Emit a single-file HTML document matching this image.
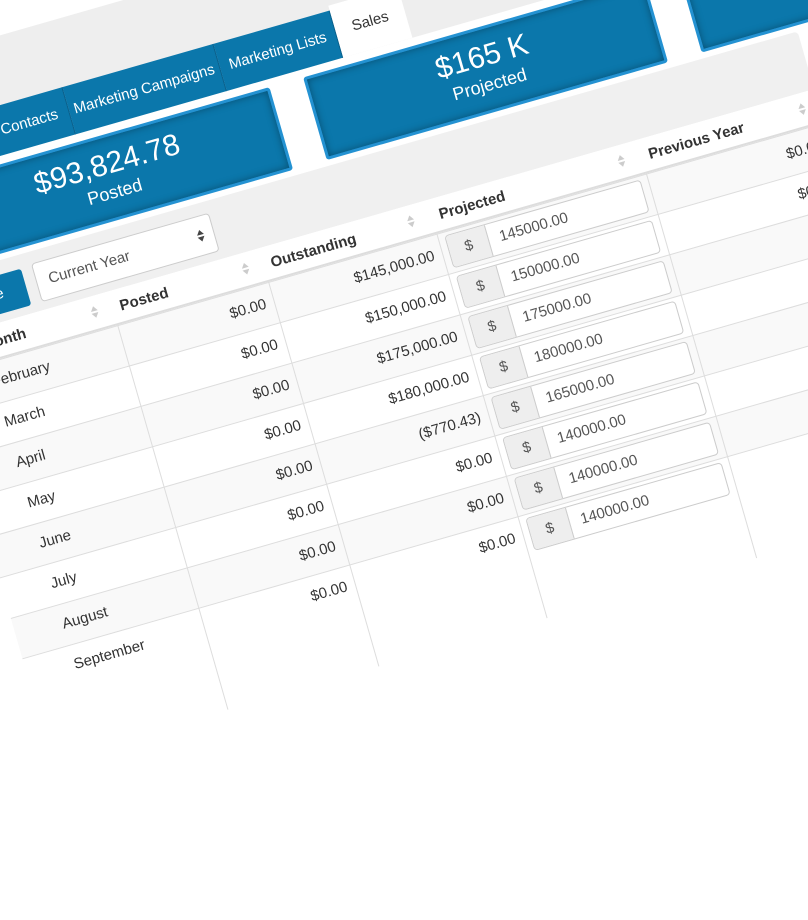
<!DOCTYPE html>
<html><head><meta charset="utf-8"><style>
html,body{margin:0;padding:0;width:808px;height:460px;overflow:hidden;background:#fff;font-family:"Liberation Sans",sans-serif;}
#w{position:absolute;left:0;top:0;width:0;height:0;transform-origin:0 0;transform:rotate(-16deg);}
#w *{white-space:nowrap;}
.a{position:absolute;box-sizing:border-box;}
.tab{position:absolute;top:101px;height:49px;background:#0b77ab;color:#fff;font-size:15px;line-height:49px;text-align:center;border-right:1px solid #0a5f8a;box-sizing:border-box;}
.box{position:absolute;top:158px;height:86px;background:#0b77ab;border:3px solid #2492d2;border-radius:3px;box-shadow:inset 0 0 8px rgba(0,0,0,.35);color:#fff;text-align:center;box-sizing:border-box;}
.box .v{font-size:30px;margin-top:10px;line-height:34px;}
.box .l{font-size:18px;line-height:22px;}
.th{position:absolute;top:310px;height:35px;font-weight:bold;font-size:15px;color:#333;line-height:35px;box-sizing:border-box;padding-left:8px;}
.sort{position:absolute;top:319px;width:8px;height:14px;}
.row{position:absolute;left:-160px;width:920px;height:42px;border-top:1px solid #ddd;box-sizing:border-box;}
.c{position:absolute;font-size:15px;color:#333;line-height:42px;}
.r{text-align:right;}
.vl{position:absolute;top:345px;width:1px;height:400px;background:#ddd;}
.ig{position:absolute;left:362px;width:204px;height:34px;border:1px solid #ccc;border-radius:4px;background:#fff;box-sizing:border-box;overflow:hidden;}
.ig .d{position:absolute;left:0;top:0;width:40px;height:32px;background:#eee;border-right:1px solid #ccc;text-align:center;line-height:32px;font-size:15px;color:#555;}
.ig .t{position:absolute;left:52px;top:0;line-height:32px;font-size:15px;color:#555;}
</style></head><body>
<div id="w">
  <div class="a" style="left:-400px;top:34px;width:2000px;height:116px;background:#eeeeee;"></div>
  <div class="tab" style="left:-240px;width:194px;"></div>
  <div class="tab" style="left:-46px;width:82px;">Contacts</div>
  <div class="tab" style="left:36px;width:157px;">Marketing Campaigns</div>
  <div class="tab" style="left:193px;width:121px;">Marketing Lists</div>
  <div class="a" style="left:314px;top:96px;width:72px;height:54px;background:#fff;color:#333;font-size:15px;line-height:54px;text-align:center;">Sales</div>

  <div class="box" style="left:-120px;width:355px;"><div class="v">$93,824.78</div><div class="l">Posted</div></div>
  <div class="box" style="left:270px;width:355px;"><div class="v">$165 K</div><div class="l">Projected</div></div>

  <div class="a" style="left:-200px;top:250px;width:958px;height:60px;background:#f0f0f0;border-radius:4px;"></div>
  <div class="a" style="left:-135px;top:264px;width:81px;height:38px;background:#0b77ab;color:#fff;font-size:15px;line-height:38px;text-align:center;border-radius:3px;">Save</div>
  <div class="a" style="left:-43px;top:262px;width:185px;height:40px;background:#fff;border:1px solid #ccc;border-radius:4px;font-size:15px;color:#555;line-height:38px;padding-left:12px;">Current Year
    <svg style="position:absolute;right:9px;top:12px" width="8" height="14" viewBox="0 0 8 14"><path d="M4 1 L7.5 6 L0.5 6 Z M4 13 L7.5 8 L0.5 8 Z" fill="#444"/></svg></div>

  <div class="a" style="left:-200px;top:310px;width:960px;height:35px;background:#fff;border-bottom:2px solid #ddd;"></div>
  <div class="th" style="left:-120px;">Month</div>
  <div class="th" style="left:23px;">Posted</div>
  <div class="th" style="left:180px;">Outstanding</div>
  <div class="th" style="left:355px;">Projected</div>
  <div class="th" style="left:573px;">Previous Year</div>
  <svg class="sort" style="left:1px" viewBox="0 0 8 14"><path d="M4 1 L7.5 6 L0.5 6 Z M4 13 L7.5 8 L0.5 8 Z" fill="#ccc"/></svg>
  <svg class="sort" style="left:158px" viewBox="0 0 8 14"><path d="M4 1 L7.5 6 L0.5 6 Z M4 13 L7.5 8 L0.5 8 Z" fill="#ccc"/></svg>
  <svg class="sort" style="left:330px" viewBox="0 0 8 14"><path d="M4 1 L7.5 6 L0.5 6 Z M4 13 L7.5 8 L0.5 8 Z" fill="#ccc"/></svg>
  <svg class="sort" style="left:549px" viewBox="0 0 8 14"><path d="M4 1 L7.5 6 L0.5 6 Z M4 13 L7.5 8 L0.5 8 Z" fill="#ccc"/></svg>
  <svg class="sort" style="left:737px" viewBox="0 0 8 14"><path d="M4 1 L7.5 6 L0.5 6 Z M4 13 L7.5 8 L0.5 8 Z" fill="#ccc"/></svg>

  <div class="row" style="top:345px;background:#f9f9f9;"></div>
  <div class="row" style="top:387px;background:#fff;"></div>
  <div class="row" style="top:429px;background:#f9f9f9;"></div>
  <div class="row" style="top:471px;background:#fff;"></div>
  <div class="row" style="top:513px;background:#f9f9f9;"></div>
  <div class="row" style="top:555px;background:#fff;"></div>
  <div class="row" style="top:597px;background:#f9f9f9;"></div>
  <div class="row" style="top:639px;background:#fff;"></div>
  <div class="vl" style="left:23px"></div>
  <div class="vl" style="left:180px"></div>
  <div class="vl" style="left:355px"></div>
  <div class="vl" style="left:573px"></div>
  <div class="vl" style="left:759px"></div>

  <div class="c" style="left:-113px;top:345px">February</div>
  <div class="c" style="left:-112px;top:387px">March</div>
  <div class="c" style="left:-112px;top:429px">April</div>
  <div class="c" style="left:-112px;top:471px">May</div>
  <div class="c" style="left:-112px;top:513px">June</div>
  <div class="c" style="left:-112px;top:555px">July</div>
  <div class="c" style="left:-112px;top:597px">August</div>
  <div class="c" style="left:-112px;top:639px">September</div>

  <div class="c r" style="left:23px;width:149px;top:345px">$0.00</div>
  <div class="c r" style="left:23px;width:149px;top:387px">$0.00</div>
  <div class="c r" style="left:23px;width:149px;top:429px">$0.00</div>
  <div class="c r" style="left:23px;width:149px;top:471px">$0.00</div>
  <div class="c r" style="left:23px;width:149px;top:513px">$0.00</div>
  <div class="c r" style="left:23px;width:149px;top:555px">$0.00</div>
  <div class="c r" style="left:23px;width:149px;top:597px">$0.00</div>
  <div class="c r" style="left:23px;width:149px;top:639px">$0.00</div>

  <div class="c r" style="left:180px;width:167px;top:345px">$145,000.00</div>
  <div class="c r" style="left:180px;width:167px;top:387px">$150,000.00</div>
  <div class="c r" style="left:180px;width:167px;top:429px">$175,000.00</div>
  <div class="c r" style="left:180px;width:167px;top:471px">$180,000.00</div>
  <div class="c r" style="left:180px;width:167px;top:513px">($770.43)</div>
  <div class="c r" style="left:180px;width:167px;top:555px">$0.00</div>
  <div class="c r" style="left:180px;width:167px;top:597px">$0.00</div>
  <div class="c r" style="left:180px;width:167px;top:639px">$0.00</div>

  <div class="ig" style="top:349px"><div class="d">$</div><div class="t">145000.00</div></div>
  <div class="ig" style="top:391px"><div class="d">$</div><div class="t">150000.00</div></div>
  <div class="ig" style="top:433px"><div class="d">$</div><div class="t">175000.00</div></div>
  <div class="ig" style="top:475px"><div class="d">$</div><div class="t">180000.00</div></div>
  <div class="ig" style="top:517px"><div class="d">$</div><div class="t">165000.00</div></div>
  <div class="ig" style="top:559px"><div class="d">$</div><div class="t">140000.00</div></div>
  <div class="ig" style="top:601px"><div class="d">$</div><div class="t">140000.00</div></div>
  <div class="ig" style="top:643px"><div class="d">$</div><div class="t">140000.00</div></div>

  <div class="c r" style="left:573px;width:178px;top:345px">$0.00</div>
  <div class="c r" style="left:573px;width:178px;top:387px">$0.00</div>
  <div class="c r" style="left:573px;width:178px;top:429px">$0.00</div>
  <div class="c r" style="left:573px;width:178px;top:471px">$0.00</div>
  <div class="c r" style="left:573px;width:178px;top:513px">$0.00</div>
  <div class="c r" style="left:573px;width:178px;top:555px">$0.00</div>
  <div class="a" style="left:760px;top:150px;width:600px;height:700px;background:#fff;"></div>
  <div class="box" style="left:660px;width:355px;"></div>
</div>
</body></html>
